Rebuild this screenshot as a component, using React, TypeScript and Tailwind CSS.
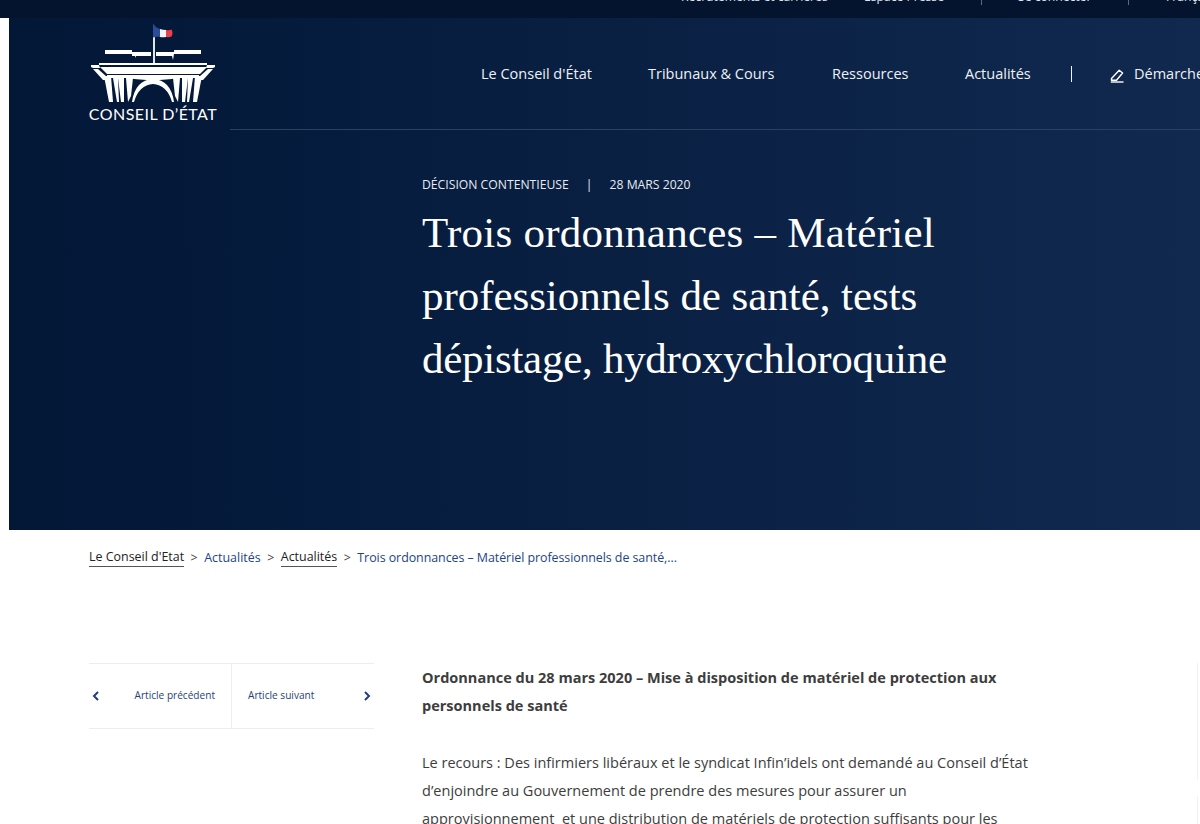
import React from "react";

const sans = "font-['Open_Sans',sans-serif]";

function Logo() {
  const columns = [
    "M15 56 H22 L24 82 H20 Z",
    "M24 58 H29 L30 82 H28 Z",
    "M29 58 H35 L35 82 H32 Z",
    "M37 58 H44 L42 76 L39 82 Z",
  ];
  return (
    <div className="flex flex-col items-center w-[128px]">
      <svg width="128" height="82" viewBox="0 0 128 82" className="block" fill="#fff">
        {/* flag and pole */}
        <rect x="64" y="16" width="2" height="28" fill="#dfe3ea" />
        <path d="M64 3.500 Q67 8 71 9 V17 Q67 16.500 64 17.500 Z" fill="#2b4c96" />
        <path d="M71 9 Q74 10 77 10 V17 Q74 17.500 71 17 Z" fill="#f3f4f7" />
        <path d="M77 10 Q80 10.500 82.500 9.500 Q84.500 13 82.500 16.500 Q80 17.500 77 17 Z" fill="#e6424c" />
        {/* roof lines */}
        <path d="M16 30 H43 V32 H62 V36 H47 L46.500 38 L46 36 H43 V34 H16 Z" />
        <path d="M112 30 H85 V32 H67 V36 H83 L84 40 L85 34 H112 Z" />
        {/* cornice and entablature */}
        <rect x="10" y="43" width="108" height="2" />
        <path d="M11 47 H118 L111 54 H18 Z" />
        <path d="M2 45 H10 L11 48 H8 L4 48 L2 47 Z" />
        <path d="M126 45 H118 L117 48 H120 L124 48 L126 47 Z" />
        <path d="M18 55 H110 V58 H88 Q78 60 64 60 Q50 60 40 58 H18 Z" />
        {/* outer legs */}
        <path d="M4 49 H9 L18 57 L16 60 L14 60 Z" />
        <path d="M124 49 H119 L110 57 L112 60 L114 60 Z" />
        {/* columns, mirrored */}
        {columns.map((d) => (
          <path key={d} d={d} />
        ))}
        <g transform="translate(128 0) scale(-1 1)">
          {columns.map((d) => (
            <path key={d} d={d} />
          ))}
        </g>
        {/* arch */}
        <path d="M43 82 Q46 60 64 59 Q82 60 85 82 L83 82 Q78 65 64 64 Q50 65 45 82 Z" />
      </svg>
      <div className="font-['Lato',sans-serif] text-[16px] leading-[18px] tracking-[0.45px] text-white whitespace-nowrap mt-[3px]">
        CONSEIL D’ÉTAT
      </div>
    </div>
  );
}

function PenIcon() {
  return (
    <svg width="15" height="15" viewBox="0 0 15 15" fill="none" stroke="#fff" strokeWidth="1.4" className="mr-[9px] mt-[4px]">
      <path d="M1.5 10.5 L9.2 2.3 L12.6 5 L6.5 12.2 L1.5 12.2 Z" strokeLinejoin="round" />
      <path d="M0.8 14 H13.5" />
    </svg>
  );
}

function Chevron({ left }: { left?: boolean }) {
  return (
    <svg width="8" height="10" viewBox="0 0 8 10" fill="none" stroke="#1f3f76" strokeWidth="2">
      <path d={left ? "M6 1 L2 5 L6 9" : "M2 1 L6 5 L2 9"} />
    </svg>
  );
}

export default function App() {
  return (
    <div className={`${sans} w-[1200px] h-[824px] overflow-hidden bg-white flex flex-col relative`}>
      <div className="h-[18px] shrink-0 bg-[#04142f] overflow-hidden relative">
        <div className="absolute top-[-11px] left-[681px] flex items-center text-[12.15px] leading-[16px] text-[#dfe4ec] whitespace-nowrap">
          <span className="w-[183px]">Recrutements et carrières</span>
          <span className="w-[117px]">Espace Presse</span>
          <span className="w-px h-[16px] bg-[#5a6a85] mr-[36px]" />
          <span className="w-[110px]">Se connecter</span>
          <span className="w-px h-[16px] bg-[#5a6a85] mr-[37px]" />
          <span>Français</span>
        </div>
      </div>

      <div className="ml-[9px] h-[512px] shrink-0 bg-gradient-to-r from-[#031737] to-[#11294f] flex flex-col">
        <div className="flex h-[112px] shrink-0">
          <div className="w-[221px] shrink-0 pl-[80px] pt-[2px]">
            <Logo />
          </div>
          <div className="flex-1 min-w-0 border-b border-[#2b4160] flex items-center overflow-hidden pl-[251px]">
            <nav className="flex items-center text-[14.5px] leading-[22px] text-[#eef1f6] whitespace-nowrap">
              <span className="w-[167px]">Le Conseil d'État</span>
              <span className="w-[184px]">Tribunaux &amp; Cours</span>
              <span className="w-[133px]">Ressources</span>
              <span className="w-[106px]">Actualités</span>
              <span className="w-px h-[16px] bg-[#eef1f6] mr-[38px]" />
              <PenIcon />
              <span>Démarches</span>
            </nav>
          </div>
        </div>

        <div className="pl-[413px] pt-[47px]">
          <div className="flex items-center text-[12.2px] leading-[16px] text-[#e8ebf1] whitespace-nowrap">
            <span>DÉCISION CONTENTIEUSE</span>
            <span className="mx-[17px]">|</span>
            <span>28 MARS 2020</span>
          </div>
          <h1 className="font-['Liberation_Serif',serif] font-normal text-[43px] leading-[63px] text-white mt-[8px] whitespace-nowrap">
            <div className="tracking-[0.25px]">Trois ordonnances – Matériel</div>
            <div className="tracking-[-0.05px]">professionnels de santé, tests</div>
            <div className="tracking-[-0.27px]">dépistage, hydroxychloroquine</div>
          </h1>
        </div>
      </div>

      <nav className="ml-[89px] mt-[18px] h-[20px] flex items-center text-[12.45px] leading-[18px] text-[#1c4585] whitespace-nowrap">
        <span className="text-[#222] border-b border-[#555]">Le Conseil d'Etat</span>
        <span className="text-[#444] mx-[6.5px]">&gt;</span>
        <span>Actualités</span>
        <span className="text-[#444] mx-[6.5px]">&gt;</span>
        <span className="text-[#222] border-b border-[#555]">Actualités</span>
        <span className="text-[#444] mx-[6.5px]">&gt;</span>
        <span className="tracking-[-0.06px]">Trois ordonnances – Matériel professionnels de santé,...</span>
      </nav>

      <div className="flex mt-[96px] pl-[89px]">
        <div className="w-[285px] h-[66px] shrink-0 border-y border-[#ebedf0] flex text-[10.1px] text-[#1f3f76]">
          <div className="w-[143px] border-r border-[#ebedf0] flex items-center justify-between pl-[3px] pr-[16px]">
            <Chevron left />
            <span>Article précédent</span>
          </div>
          <div className="flex-1 flex items-center justify-between pl-[16px] pr-[3px]">
            <span>Article suivant</span>
            <Chevron />
          </div>
        </div>
        <article className="ml-[48px] w-[625px] text-[14.53px] leading-[28px] text-[#3d3d3d]">
          <p className="font-bold">
            Ordonnance du 28 mars 2020 – Mise à disposition de matériel de protection aux personnels de santé
          </p>
          <p className="mt-[29px] whitespace-nowrap">
            Le recours : Des infirmiers libéraux et le syndicat Infin’idels ont demandé au Conseil d’État
            <br />
            d’enjoindre au Gouvernement de prendre des mesures pour assurer un
            <br />
            approvisionnement&nbsp; et une distribution de matériels de protection suffisants pour les
          </p>
        </article>
      </div>
      <div className="absolute left-[1197px] top-[663px] w-[3px] h-[117px] border-l border-[#f1f1f1]" />
      <div className="absolute left-[1197px] top-[796px] w-[3px] h-[28px] border-l border-[#f1f1f1]" />
    </div>
  );
}
